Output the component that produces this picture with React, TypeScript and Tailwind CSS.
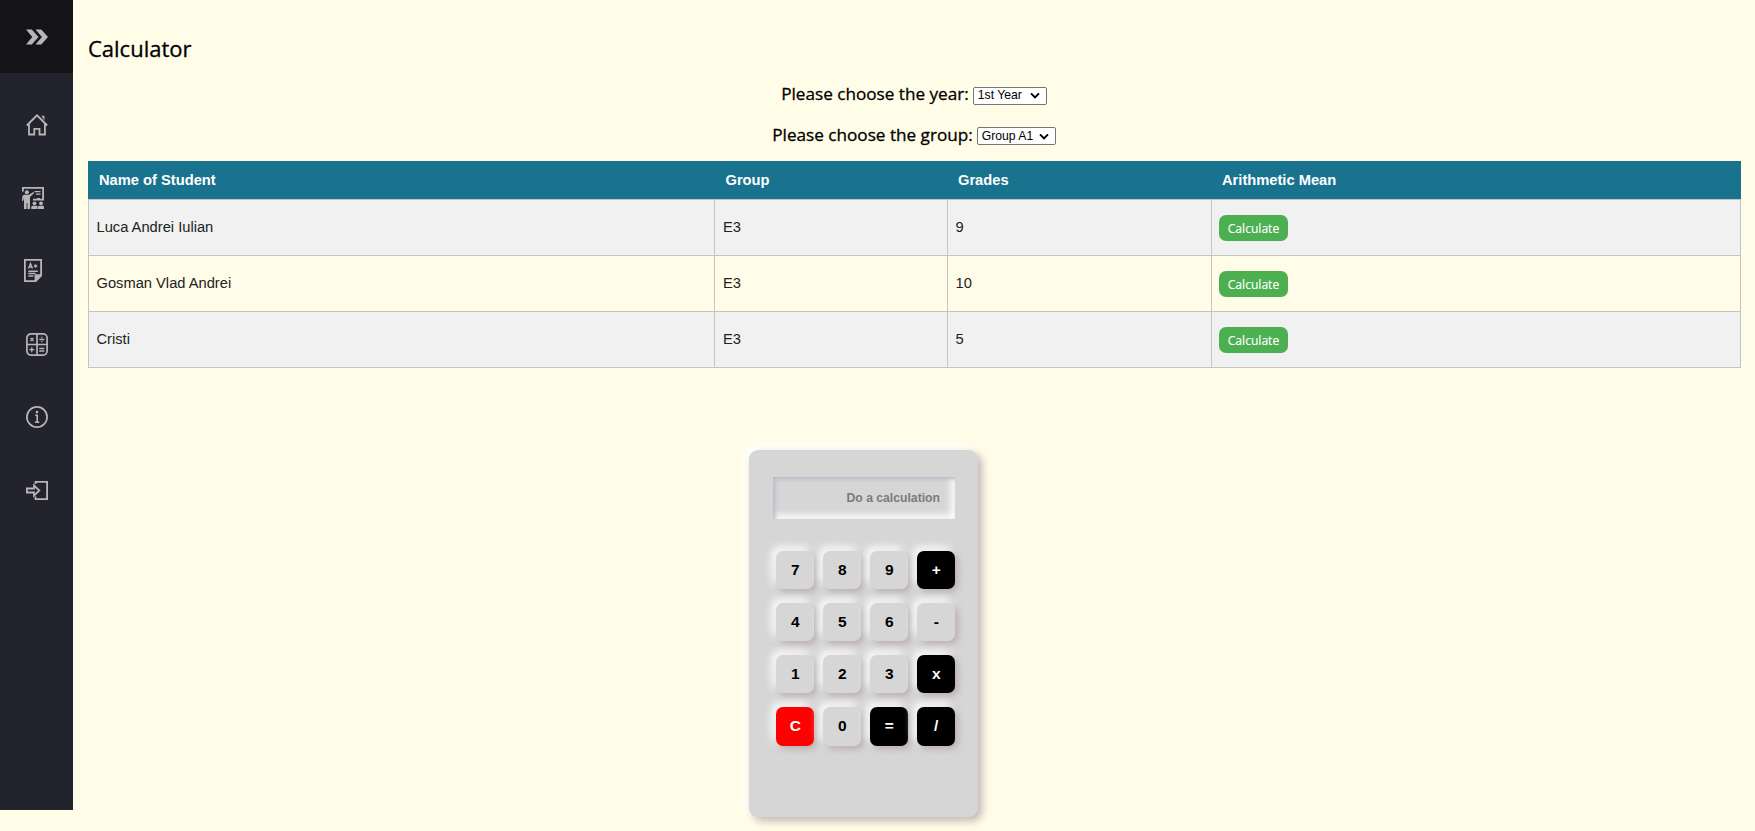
import type { ReactNode } from "react";

const students = [
  { name: "Luca Andrei Iulian", group: "E3", grades: "9" },
  { name: "Gosman Vlad Andrei", group: "E3", grades: "10" },
  { name: "Cristi", group: "E3", grades: "5" },
];

const keys = ["7", "8", "9", "+", "4", "5", "6", "-", "1", "2", "3", "x", "C", "0", "=", "/"];

function keyColor(k: string) {
  if (k === "C") return "bg-[#ff0000] text-white";
  if (["+", "x", "=", "/"].includes(k)) return "bg-black text-white";
  return "bg-[#d6d6d6] text-black";
}

function NavItem({ children, shift = false }: { children: ReactNode; shift?: boolean }) {
  return (
    <a href="#" className={`flex h-[73.2px] w-full items-center justify-center ${shift ? "pr-[7px]" : ""}`}>
      {children}
    </a>
  );
}

function Sidebar() {
  return (
    <nav className="flex h-[809.5px] w-[73.4px] shrink-0 flex-col bg-[#23232e] text-[#b6b6b6]">
      <a href="#" className="flex h-[73.2px] items-center justify-center bg-[#141418]">
        <svg width="22" height="16" viewBox="0 0 22 16" fill="currentColor">
          <path d="M0 .4h5.8L12.5 8l-6.700 7.500H0L6.300 8z" />
          <path d="M9.500.4h5.800L22 8l-6.700 7.500H9.500L15.900 8z" />
        </svg>
      </a>
      <div className="h-[14.800px]" />
      <NavItem>
        <svg width="22" height="22" viewBox="0 0 22 22" fill="none" stroke="currentColor" strokeWidth="1.800">
          <path d="M.8 11.500 11 1.300l10.200 10.200M3 10v10.500h5.300v-5.700h5.200v5.700h5.400V10" />
          <path d="M15.500 1.700h2.900v5z" fill="currentColor" stroke="none" />
        </svg>
      </NavItem>
      <NavItem shift>
        <svg width="22" height="22" viewBox="0 0 22 22" fill="currentColor">
          <path d="M0 0h22v13.500H11v-1.700h9.200V1.800H1.800v2.700H0z" />
          <circle cx="4.900" cy="5.300" r="2" />
          <path d="M2 7.800h5l4.300-2.800.9 1.100L8 10v12H5.400v-6h-.8v6H2v-8.500L1.600 13V10.500L1 14H0l.4-5z" />
          <path d="M12.500 4h6v1.300h-6zM14 6.500h4.500v1.300H14zM15 11h3v1h-3z" />
          <circle cx="12.500" cy="16.300" r="1.900" />
          <circle cx="19" cy="16.300" r="1.900" />
          <path d="M9.300 22v-2q0-1.200 1.200-1.200h4q1.100 0 1.100 1.200v2zM16 22v-2q0-1.200 1.200-1.200H21q1 0 1 1.200v2z" />
        </svg>
      </NavItem>
      <NavItem shift>
        <svg width="18" height="23" viewBox="0 0 18 23" fill="none" stroke="currentColor" strokeWidth="1.800">
          <path d="M.9.900h16.200v15.400l-5.600 5.800H.9z" />
          <path d="M11.500 22v-5.800h5.700z" fill="currentColor" />
          <path d="m4.500 9.500 2-5 2 5M5.200 8h2.700M9.800 7h3.500M11.500 5.300v3.400" strokeWidth="1.300" />
          <path d="M4.300 12.200h9.500M4.300 14.500h7.200M4.300 17h5.200" strokeWidth="1.400" />
        </svg>
      </NavItem>
      <NavItem>
        <svg width="22" height="23" viewBox="0 0 22 23" fill="none" stroke="currentColor" strokeWidth="1.700">
          <rect x=".9" y=".9" width="20.200" height="21.200" rx="4" />
          <path d="M11 1v21M1 11.500h20" />
          <path d="m4.500 5 3 3m0-3-3 3M13.300 6.500h5M3.300 16.700h5M5.800 14.200v5M13.300 15.500h5M13.300 18h5" strokeWidth="1.300" />
          <path d="M15.200 3.700h1.200v1.200h-1.200zM15.200 8.100h1.200v1.200h-1.200z" fill="currentColor" stroke="none" />
        </svg>
      </NavItem>
      <NavItem>
        <svg width="22" height="22" viewBox="0 0 22 22" fill="none" stroke="currentColor" strokeWidth="1.700">
          <circle cx="11" cy="11" r="10.100" />
          <path d="M9.200 9.200h2v7M8.900 16.200h4.400" strokeWidth="1.600" />
          <circle cx="11" cy="6.100" r="1.300" fill="currentColor" stroke="none" />
        </svg>
      </NavItem>
      <NavItem>
        <svg width="22" height="19" viewBox="0 0 22 19" fill="none" stroke="currentColor" strokeWidth="1.800">
          <path d="M9.500 3V.9h11.600v17.200H9.500v-2.600" />
          <path d="M.9 7.500H8V4.300l5.300 5.200L8 14.700v-3.200H.9z" />
        </svg>
      </NavItem>
    </nav>
  );
}

function Picker({ label, value, widthClass }: { label: string; value: string; widthClass: string }) {
  return (
    <div className="flex h-[40.500px] items-start justify-center gap-[4px] pr-[1px]">
      <span className="text-[17.150px] leading-[23.500px] font-medium whitespace-nowrap [-webkit-text-stroke:0.3px_black]">
        {label}
      </span>
      <button
        className={`mt-[4.500px] flex h-[18px] items-center justify-between rounded-[2px] border border-[#767676] bg-white pr-[6px] pl-[4px] font-['Liberation_Sans',sans-serif] text-[12.200px] leading-none text-black ${widthClass}`}
      >
        <span>{value}</span>
        <svg width="10" height="7" viewBox="0 0 10 7" fill="none" stroke="black" strokeWidth="1.900">
          <path d="m1 1.300 4 4 4-4" />
        </svg>
      </button>
    </div>
  );
}

function StudentTable() {
  return (
    <table className="w-full table-fixed border-collapse font-['Liberation_Sans',sans-serif] text-[14.700px]">
      <colgroup>
        <col className="w-[626.500px]" />
        <col className="w-[232.500px]" />
        <col className="w-[264px]" />
        <col />
      </colgroup>
      <thead>
        <tr className="h-[38px] bg-[#19738f] text-left text-white">
          {["Name of Student", "Group", "Grades", "Arithmetic Mean"].map((h) => (
            <th key={h} className="p-0 pl-[10.500px] font-bold">
              {h}
            </th>
          ))}
        </tr>
      </thead>
      <tbody>
        {students.map((s) => (
          <tr key={s.name} className="h-[56px] text-[#222] odd:bg-[#f1f1f1]">
            <td className="border border-[#c4c4c4] pl-[7.500px]">{s.name}</td>
            <td className="border border-[#c4c4c4] pl-[7.500px]">{s.group}</td>
            <td className="border border-[#c4c4c4] pl-[7.500px]">{s.grades}</td>
            <td className="border border-[#c4c4c4] pt-[1px] pl-[7px]">
              <button className="block h-[26px] w-[69px] rounded-[7px] bg-[#4caf50] font-['Open_Sans',sans-serif] text-[12.100px] leading-[27px] text-white [-webkit-text-stroke:0.15px_white]">
                Calculate
              </button>
            </td>
          </tr>
        ))}
      </tbody>
    </table>
  );
}

function Calculator() {
  return (
    <div className="ml-[661px] h-[366.500px] w-[229px] rounded-[9px] bg-[#d6d6d6] pt-[27px] pl-[24px] font-['Liberation_Sans',sans-serif] font-bold shadow-[4px_4px_8px_#c4b4b4,-4px_-4px_9px_#ffffff]">
      <div className="flex h-[42px] w-[182px] items-center justify-end pr-[15px] text-[12.200px] text-[#7b7b7b] shadow-[inset_2px_2px_4px_#b4b9c6,inset_-4px_-4px_7px_#ffffff]">
        Do a calculation
      </div>
      <div className="mt-[31.500px] ml-[3px] grid w-fit grid-cols-[repeat(4,38.500px)] gap-x-[8.500px] gap-y-[13.700px]">
        {keys.map((k) => (
          <button
            key={k}
            className={`h-[38.500px] rounded-[7px] pb-[1px] text-[15.500px] shadow-[3px_3px_7px_#b9adad,-4px_-4px_8px_#ffffff] ${keyColor(k)}`}
          >
            {k}
          </button>
        ))}
      </div>
    </div>
  );
}

export default function App() {
  return (
    <div className="flex h-[831px] items-start overflow-hidden bg-[#fffde7] font-['Open_Sans',sans-serif] text-black">
      <Sidebar />
      <main className="flex min-w-0 flex-1 flex-col pr-[14px] pl-[14.600px]">
        <h1 className="mt-[33px] h-[49px] text-[22px] leading-[30px] font-medium [-webkit-text-stroke:0.3px_black]">
          Calculator
        </h1>
        <Picker label="Please choose the year:" value="1st Year" widthClass="w-[74px]" />
        <Picker label="Please choose the group:" value="Group A1" widthClass="w-[79px]" />
        <div className="-mt-[2px]">
          <StudentTable />
        </div>
        <div className="mt-[82.500px]">
          <Calculator />
        </div>
      </main>
    </div>
  );
}
